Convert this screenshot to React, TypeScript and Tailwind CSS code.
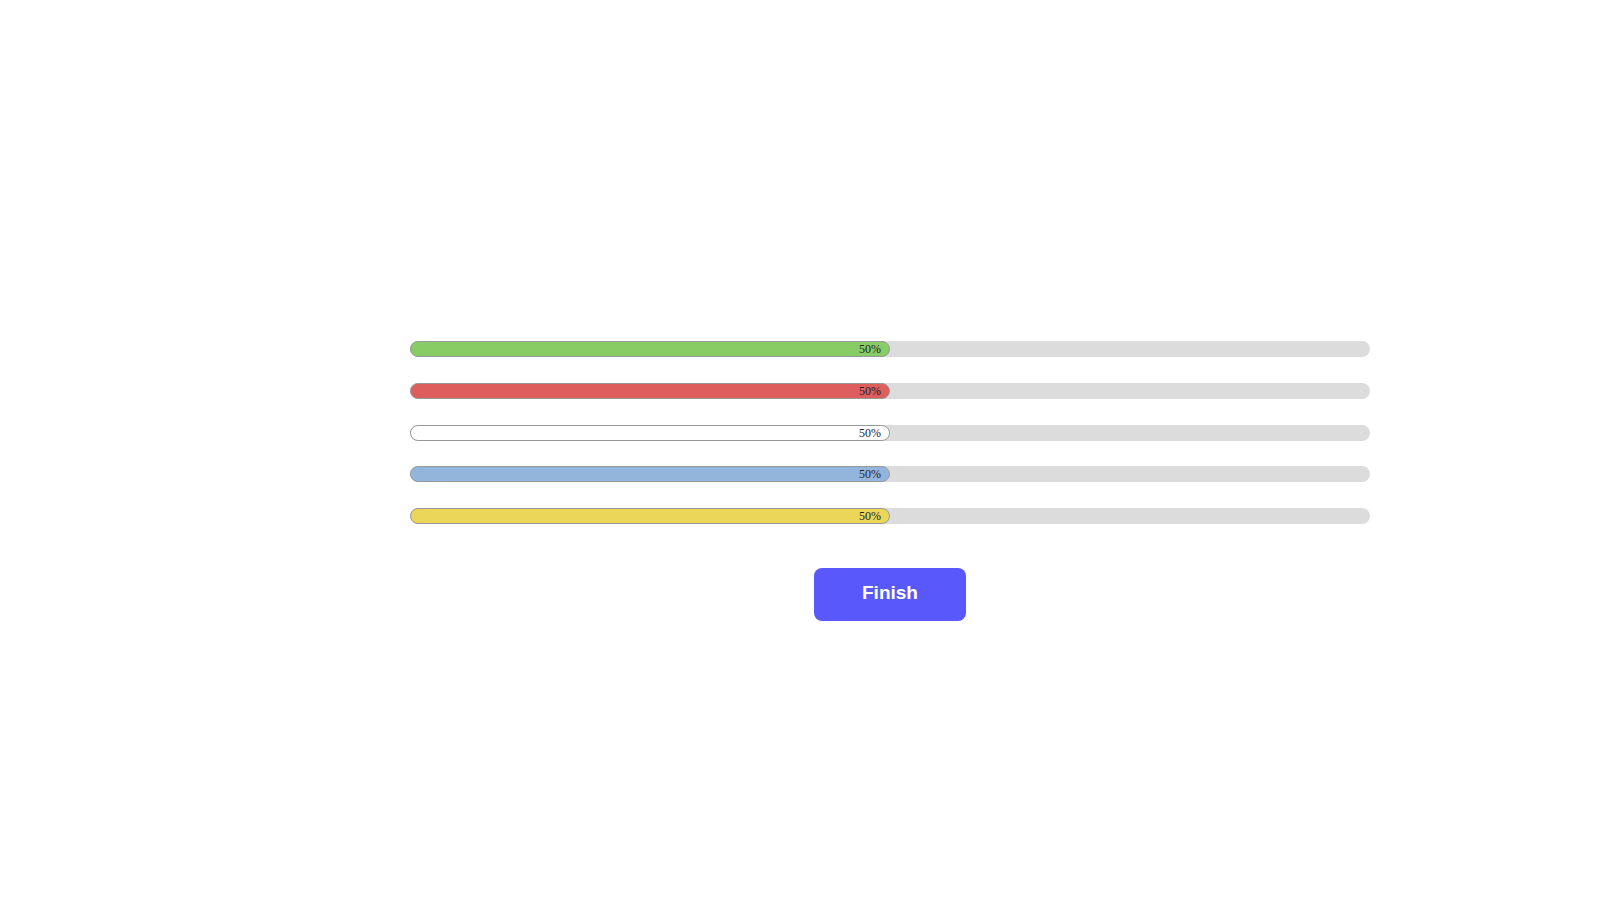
import React from "react";

const bars = [
  { color: "bg-[#88cc66]" },
  { color: "bg-[#de5d5d]" },
  { color: "bg-white" },
  { color: "bg-[#93b5dc]" },
  { color: "bg-[#ebd65a]" },
];

export default function App() {
  return (
    <div className="w-[1624px] h-[920px] bg-white">
      <div className="pt-[341px] pl-[410px] w-[1370px]">
        <div className="flex flex-col gap-[25.75px] w-[960px]">
          {bars.map((b, i) => (
            <div key={i} className="h-4 w-full rounded-full bg-[#dcdcdc]">
              <div
                className={`h-4 w-1/2 rounded-full border border-[#999999] ${b.color} flex items-center justify-end pr-[8px] text-[12px] leading-none text-[#222] font-['Liberation_Serif',serif]`}
              >
                50%
              </div>
            </div>
          ))}
        </div>
        <div className="w-[960px] flex justify-center mt-[44px]">
          <button className="w-[152px] h-[53px] rounded-[8px] bg-[#5959fb] text-white text-[19px] font-bold font-['Liberation_Sans',Arial,sans-serif] flex items-center justify-center pb-[3px]">
            Finish
          </button>
        </div>
      </div>
    </div>
  );
}
